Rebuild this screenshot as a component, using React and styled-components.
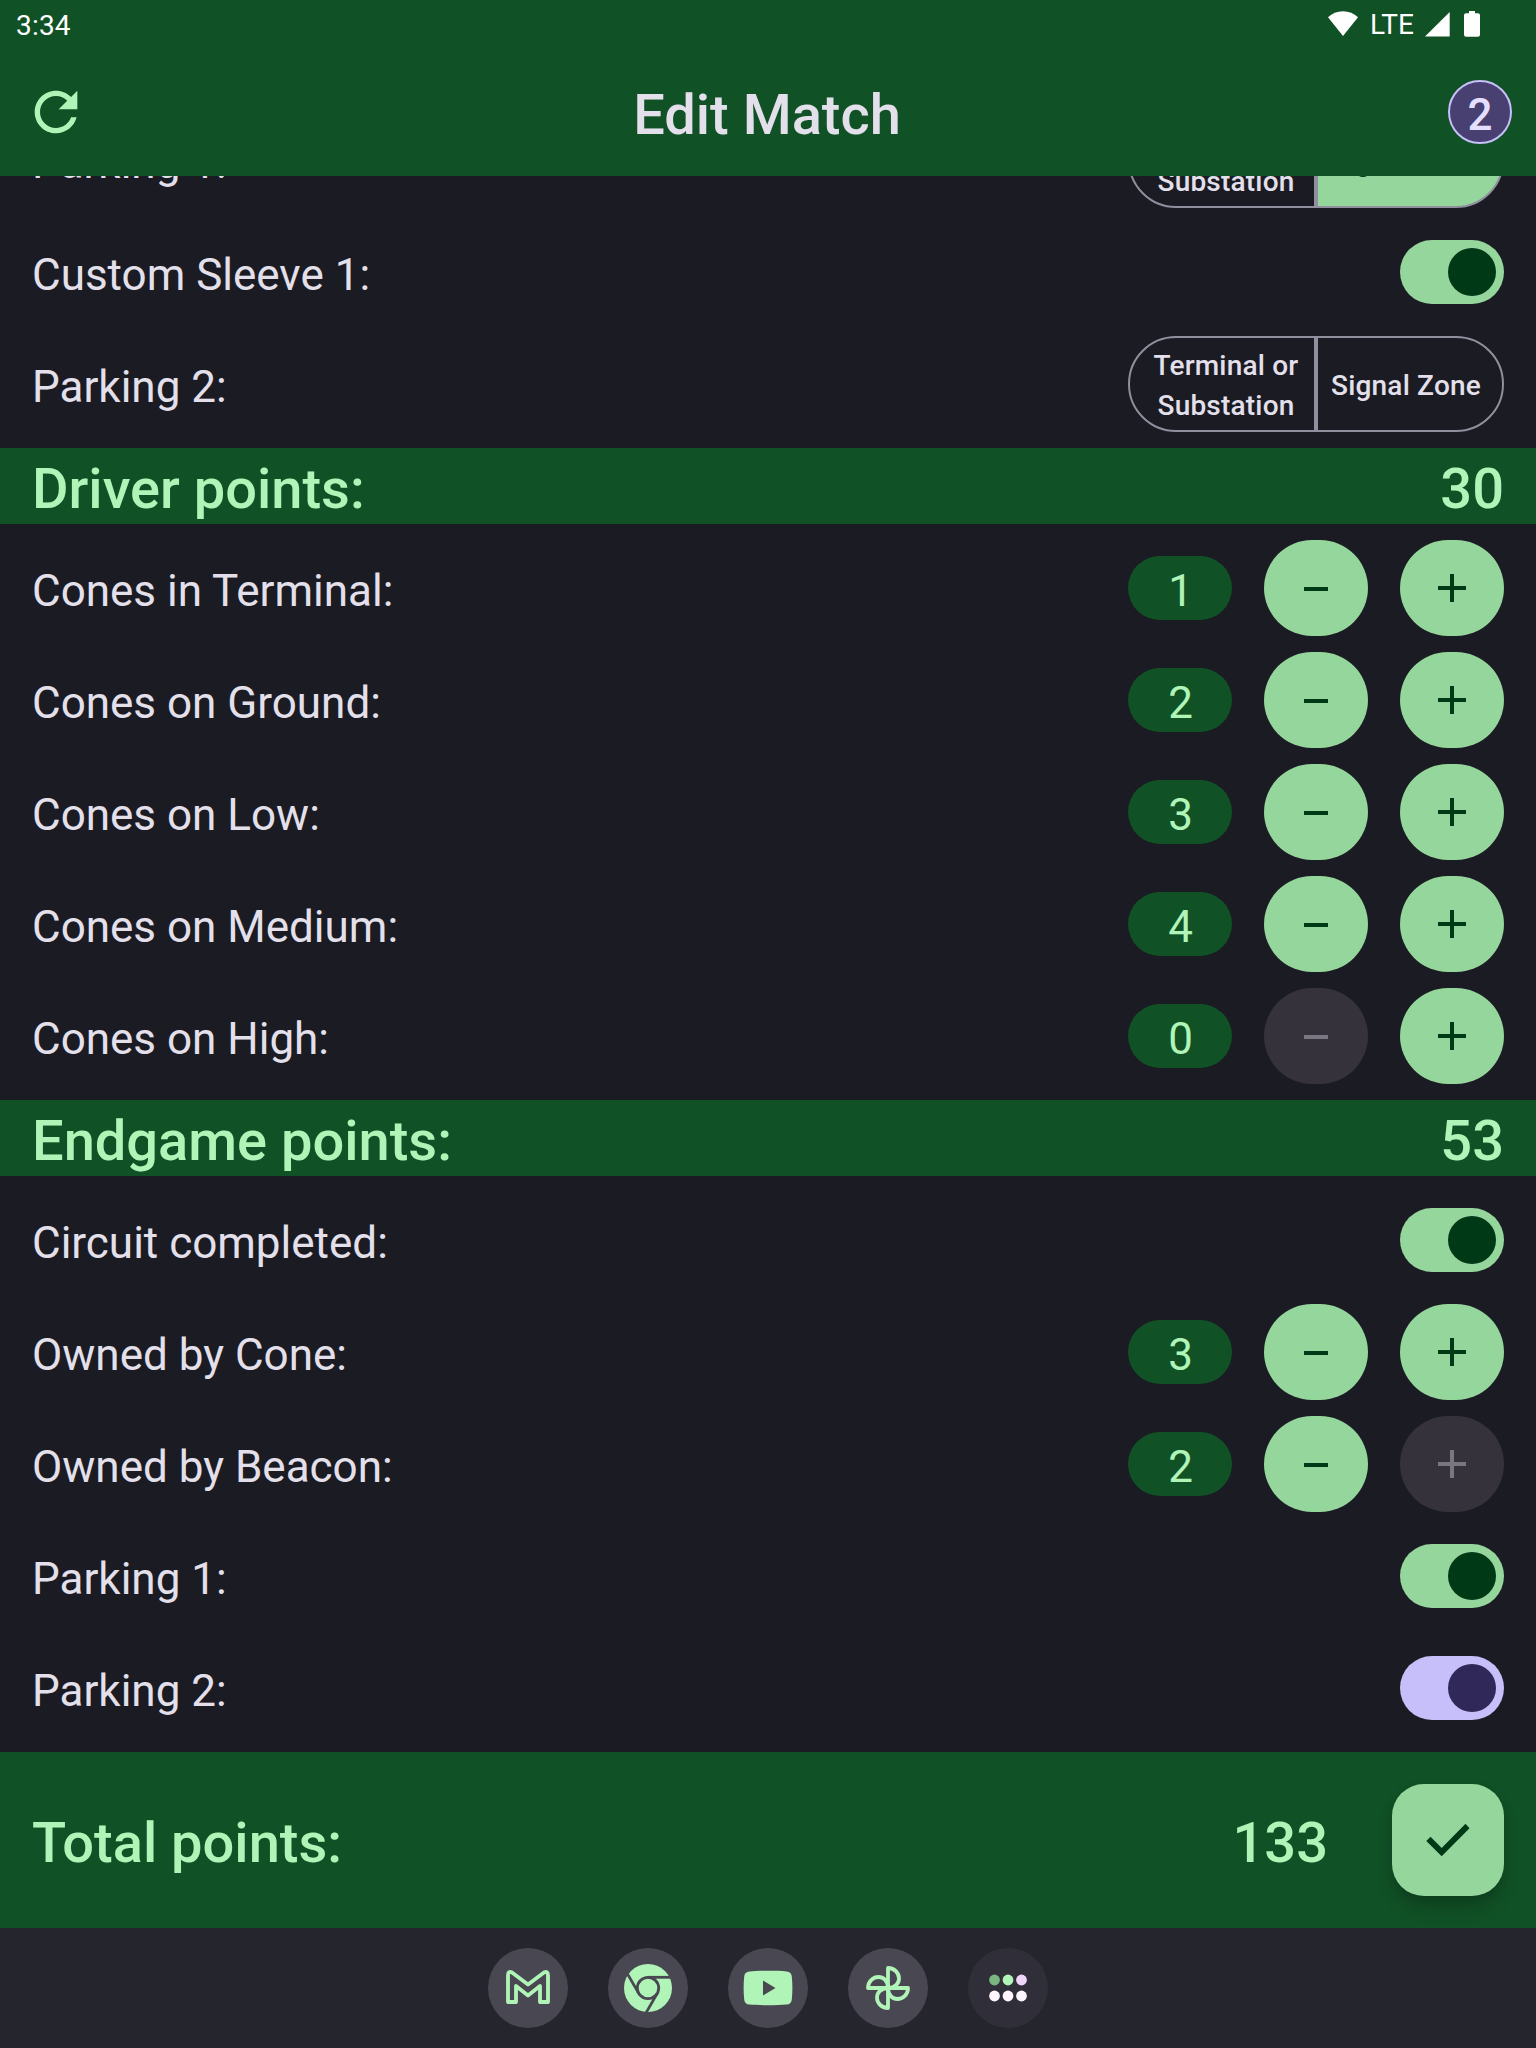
import React from "react";
import styled, { createGlobalStyle } from "styled-components";

const c = {
  surface: "#1b1b23",
  text: "#e4e0eb",
  container: "#115126",
  onContainer: "#b1f4b7",
  primary: "#95d69c",
  onPrimary: "#003916",
  outline: "#918f9e",
  disabled: "#35323c",
  onDisabled: "#7b7782",
  violet: "#c7bff9",
  onVioletDark: "#2f2859",
  violetContainer: "#474070",
  nav: "#25252d",
};

const Global = createGlobalStyle`
  * { box-sizing: border-box; }
  body { margin: 0; background: ${c.surface}; }
  button { border: 0; padding: 0; font: inherit; color: inherit; }
`;

const Screen = styled.div`
  width: 1536px;
  height: 2048px;
  display: flex;
  flex-direction: column;
  overflow: hidden;
  background: ${c.surface};
  color: ${c.text};
  font-family: Roboto, "Liberation Sans", sans-serif;
`;

const Header = styled.header`
  height: 176px;
  flex: none;
  background: ${c.container};
  display: flex;
  flex-direction: column;
`;

const StatusBar = styled.div`
  height: 48px;
  padding: 0 56px 0 16px;
  display: flex;
  align-items: center;
  justify-content: space-between;
  color: #fff;
  font-size: 28px;
  line-height: 44px;
`;

const Clock = styled.span`
  padding-top: 3px;
  letter-spacing: 0.2px;
`;

const StatusIcons = styled.div`
  display: flex;
  align-items: center;
  svg { display: block; flex: none; }
`;

const Network = styled.span`
  width: 65px;
  padding: 1px 0 0 11px;
`;

const TitleBar = styled.div`
  height: 128px;
  padding: 0 24px;
  display: grid;
  grid-template-columns: 64px 1fr 64px;
  align-items: center;
`;

const Title = styled.h1`
  margin: 0;
  padding: 6px 2px 0 0;
  text-align: center;
  font-size: 56px;
  font-weight: 500;
  line-height: 72px;
`;

const IconButton = styled.button`
  width: 64px;
  height: 64px;
  background: none;
  color: ${c.onContainer};
  svg { display: block; }
`;

const Badge = styled.div`
  width: 64px;
  height: 64px;
  border-radius: 50%;
  border: 2px solid ${c.violet};
  background: ${c.violetContainer};
  color: #e5deff;
  font-size: 44px;
  font-weight: 500;
  line-height: 66px;
  text-align: center;
`;

const Body = styled.main`
  flex: 1;
  min-height: 0;
  display: flex;
  flex-direction: column;
  justify-content: flex-end;
  overflow: hidden;
`;

const Rows = styled.div`
  padding: 8px 32px;
  flex: none;
`;

const Row = styled.div`
  height: 112px;
  display: flex;
  align-items: center;
  justify-content: space-between;
`;

const Label = styled.div`
  padding-top: 6px;
  font-size: 44px;
  line-height: 56px;
`;

const Controls = styled.div`
  display: flex;
  align-items: center;
  gap: 32px;
`;

const Count = styled.div`
  width: 104px;
  height: 64px;
  padding: 6px 0 0 1px;
  border-radius: 32px;
  background: ${c.container};
  color: ${c.onContainer};
  font-size: 44px;
  line-height: 58px;
  text-align: center;
`;

const StepButton = styled.button`
  width: 104px;
  height: 96px;
  border-radius: 48px;
  display: grid;
  place-items: center;
  background: ${c.primary};
  color: ${c.onPrimary};
  &:disabled { background: ${c.disabled}; color: ${c.onDisabled}; }
`;

const Track = styled.div`
  width: 104px;
  height: 64px;
  padding: 8px;
  border-radius: 32px;
  display: flex;
  justify-content: flex-end;
  background: ${(p) => (p.$violet ? c.violet : c.primary)};
`;

const Thumb = styled.div`
  width: 48px;
  height: 48px;
  border-radius: 50%;
  background: ${(p) => (p.$violet ? c.onVioletDark : c.onPrimary)};
`;

const Segments = styled.div`
  display: flex;
`;

const Segment = styled.button`
  width: 188px;
  height: 96px;
  padding: ${(p) => (p.$end ? "3px 12px 0 4px" : "3px 4px 0 12px")};
  border: 2px solid ${c.outline};
  border-radius: ${(p) => (p.$end ? "0 48px 48px 0" : "48px 0 0 48px")};
  background: ${(p) => (p.$selected ? c.primary : "transparent")};
  color: ${(p) => (p.$selected ? c.onPrimary : c.text)};
  font-size: 28px;
  font-weight: 500;
  line-height: 40px;
  letter-spacing: 0.2px;
`;

const SectionBar = styled.div`
  height: 76px;
  flex: none;
  padding: 6px 32px 0;
  display: flex;
  align-items: center;
  justify-content: space-between;
  background: ${c.container};
  color: ${c.onContainer};
  font-size: 56px;
  font-weight: 500;
  line-height: 70px;
`;

const Footer = styled.footer`
  height: 176px;
  flex: none;
  padding: 0 32px;
  display: flex;
  align-items: center;
  justify-content: space-between;
  background: ${c.container};
  color: ${c.onContainer};
`;

const Total = styled.div`
  padding-top: 6px;
  font-size: 56px;
  font-weight: 500;
  line-height: 72px;
`;

const FooterEnd = styled.div`
  display: flex;
  align-items: center;
  gap: 64px;
`;

const Fab = styled.button`
  width: 112px;
  height: 112px;
  border-radius: 32px;
  background: ${c.primary};
  color: ${c.onPrimary};
  box-shadow: 0 13px 18px -2px rgba(0, 0, 0, 0.2), 0 2px 8px rgba(0, 0, 0, 0.07);
  svg { display: block; }
`;

const NavBar = styled.nav`
  height: 120px;
  flex: none;
  display: flex;
  align-items: center;
  justify-content: center;
  gap: 40px;
  background: ${c.nav};
`;

const AppIcon = styled.div`
  width: 80px;
  height: 80px;
  border-radius: 50%;
  background: ${(p) => (p.$dim ? "#302e38" : "#484752")};
  svg { display: block; }
`;

const Minus = () => (
  <svg width="32" height="32" viewBox="0 0 32 32"><path fill="currentColor" d="M4 15h24v4H4z" /></svg>
);
const Plus = () => (
  <svg width="32" height="32" viewBox="0 0 32 32"><path fill="currentColor" d="M14 2h4v12h12v4H18v12h-4V18H2v-4h12z" /></svg>
);

const Counter = ({ label, value, min, max }) => (
  <Row>
    <Label>{label}</Label>
    <Controls>
      <Count>{value}</Count>
      <StepButton disabled={min} aria-label="Decrease"><Minus /></StepButton>
      <StepButton disabled={max} aria-label="Increase"><Plus /></StepButton>
    </Controls>
  </Row>
);

const Toggle = ({ label, violet }) => (
  <Row>
    <Label>{label}</Label>
    <Track $violet={violet}><Thumb $violet={violet} /></Track>
  </Row>
);

const ParkingChoice = ({ label, signal }) => (
  <Row>
    <Label>{label}</Label>
    <Segments>
      <Segment>Terminal or<br />Substation</Segment>
      <Segment $end $selected={signal}>Signal Zone</Segment>
    </Segments>
  </Row>
);

export default function App() {
  return (
    <Screen>
      <Global />
      <Header>
        <StatusBar>
          <Clock>3:34</Clock>
          <StatusIcons>
            <svg width="32" height="32" viewBox="0 1 32 32" fill="currentColor">
              <path d="M1 10.2C5 6.4 10.2 4.3 16 4.3S27 6.4 31 10.2L16 29z" />
            </svg>
            <Network>LTE</Network>
            <svg width="56" height="32" viewBox="0 1 56 32" fill="currentColor">
              <path d="M1 29.5L25.7 5V29.5z" />
              <path d="M45 4h6v2.200h3q2 0 2 2v19.600q0 2-2 2H42q-2 0-2-2V8.200q0-2 2-2h3z" />
            </svg>
          </StatusIcons>
        </StatusBar>
        <TitleBar>
          <IconButton aria-label="Reset">
            <svg width="64" height="64" viewBox="0 0 24 24" fill="currentColor">
              <path d="M17.65 6.35C16.2 4.9 14.21 4 12 4c-4.42 0-7.99 3.58-7.99 8s3.57 8 7.99 8c3.73 0 6.84-2.55 7.73-6h-2.080c-.82 2.330-3.040 4-5.650 4-3.310 0-6-2.690-6-6s2.690-6 6-6c1.660 0 3.140.69 4.220 1.780L13 11h7V4l-2.350 2.350z" />
            </svg>
          </IconButton>
          <Title>Edit Match</Title>
          <Badge>2</Badge>
        </TitleBar>
      </Header>

      <Body>
        <Rows>
          <ParkingChoice label="Parking 1:" signal />
          <Toggle label="Custom Sleeve 1:" />
          <ParkingChoice label="Parking 2:" />
        </Rows>
        <SectionBar><span>Driver points:</span><span>30</span></SectionBar>
        <Rows>
          <Counter label="Cones in Terminal:" value={1} />
          <Counter label="Cones on Ground:" value={2} />
          <Counter label="Cones on Low:" value={3} />
          <Counter label="Cones on Medium:" value={4} />
          <Counter label="Cones on High:" value={0} min />
        </Rows>
        <SectionBar><span>Endgame points:</span><span>53</span></SectionBar>
        <Rows>
          <Toggle label="Circuit completed:" />
          <Counter label="Owned by Cone:" value={3} />
          <Counter label="Owned by Beacon:" value={2} max />
          <Toggle label="Parking 1:" />
          <Toggle label="Parking 2:" violet />
        </Rows>
      </Body>

      <Footer>
        <Total>Total points:</Total>
        <FooterEnd>
          <Total>133</Total>
          <Fab aria-label="Save">
            <svg width="112" height="112" viewBox="0 0 112 112">
              <path fill="currentColor" d="M49.7 72.3L34.3 57l4.2-4.2L49.700 64l23.800-24.200 4 4.400z" />
            </svg>
          </Fab>
        </FooterEnd>
      </Footer>

      <NavBar>
        <AppIcon>
          <svg width="80" height="80" viewBox="0 0 80 80" fill="none" stroke={c.onContainer} strokeWidth="3.8" strokeLinejoin="round">
            <path d="M20 27.500Q20 22.500 24 24.500L40 36.500L56 24.500Q60 22.500 60 27.500V54H52V38L40 47.500L28 38V54H20z" />
          </svg>
        </AppIcon>
        <AppIcon>
          <svg width="80" height="80" viewBox="0 0 80 80">
            <circle cx="40" cy="40" r="24" fill={c.onContainer} />
            <g fill="none" stroke="#484752" strokeWidth="2.8">
              <circle cx="40" cy="40" r="10.7" />
              {[0, 120, 240].map((a) => (
                <path key={a} d="M40 29.3H66" transform={`rotate(${a} 40 40)`} />
              ))}
            </g>
          </svg>
        </AppIcon>
        <AppIcon>
          <svg width="80" height="80" viewBox="0 0 80 80">
            <path fill={c.onContainer} d="M40 22.7c7 0 14 .1 18.500.7 3.500.5 5 2 5.300 5.200.8 7 .8 15.800 0 22.800-.3 3.200-1.800 4.700-5.300 5.200-9 .9-28 .9-37 0-3.500-.5-5-2-5.300-5.200-.8-7-.8-15.800 0-22.800.3-3.200 1.800-4.700 5.300-5.200 4.500-.6 11.500-.7 18.500-.7z" />
            <path fill="#484752" d="M35 32.5L47.5 40 35 47.5z" />
          </svg>
        </AppIcon>
        <AppIcon>
          <svg width="80" height="80" viewBox="0 0 80 80" fill="none" stroke={c.onContainer} strokeWidth="3.8" strokeLinejoin="round">
            {[0, 90, 180, 270].map((a) => (
              <path key={a} d="M0 0V-20C7-20 11-14.500 11-9.500C11-5 7.500 0 0 0Z" transform={`translate(40 40) rotate(${a})`} />
            ))}
          </svg>
        </AppIcon>
        <AppIcon $dim>
          <svg width="80" height="80" viewBox="0 0 80 80">
            <circle cx="26.5" cy="32" r="5.4" fill="#79b681" />
            <circle cx="40" cy="32" r="5.4" fill="#b1f4b7" />
            <circle cx="53.5" cy="32" r="5.4" fill="#f0d5fb" />
            {[26.5, 40, 53.5].map((x) => <circle key={x} cx={x} cy="48" r="5.4" fill="#fff5fc" />)}
          </svg>
        </AppIcon>
      </NavBar>
    </Screen>
  );
}
